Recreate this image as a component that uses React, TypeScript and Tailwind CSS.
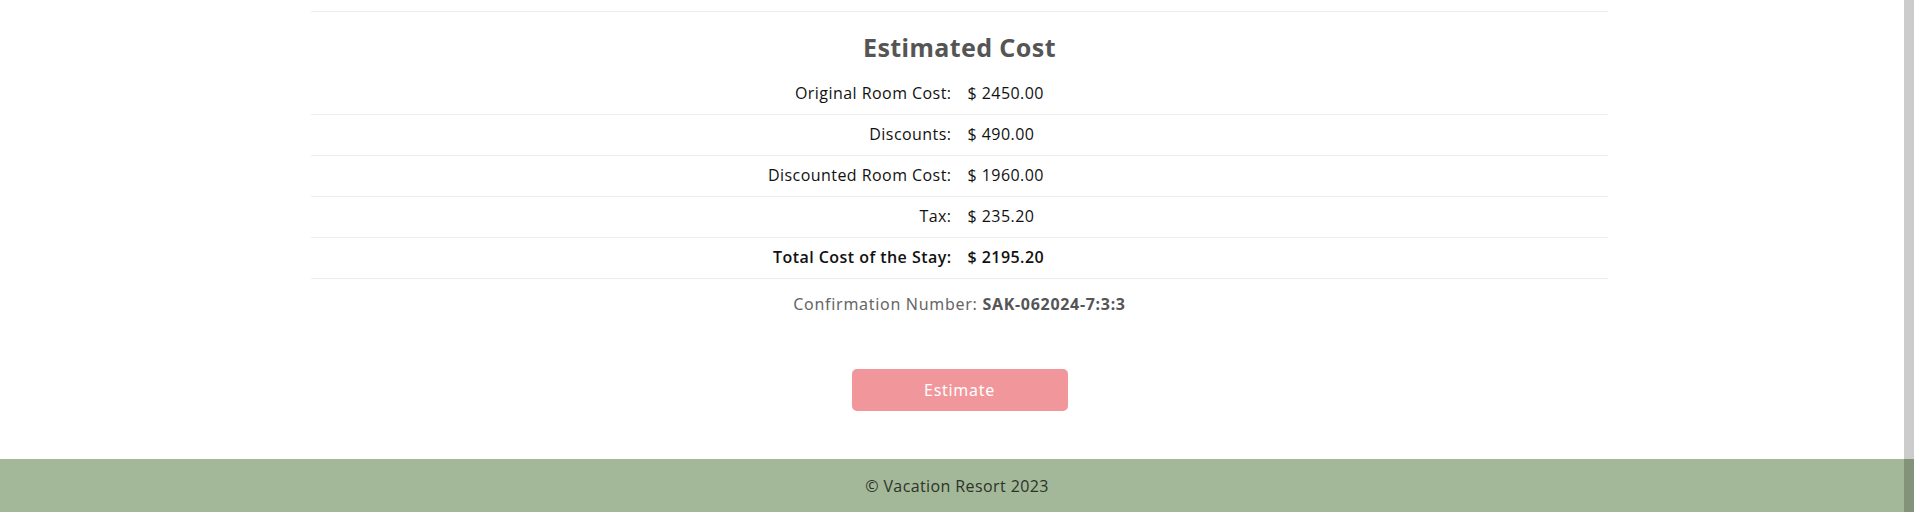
const rows = [
  { label: "Original Room Cost:", value: "$ 2450.00" },
  { label: "Discounts:", value: "$ 490.00" },
  { label: "Discounted Room Cost:", value: "$ 1960.00" },
  { label: "Tax:", value: "$ 235.20" },
  { label: "Total Cost of the Stay:", value: "$ 2195.20", bold: true },
]

const montserrat = "font-['Noto_Sans','Open_Sans',sans-serif]"
const poppins = "font-['Open_Sans','Noto_Sans',sans-serif]"

export default function App() {
  return (
    <div className="relative min-h-[512px] bg-white overflow-hidden">
      <div className="ml-[311px] w-[1297px] mt-[11px] border-t border-[#ececec]">
        <h2 className={`${montserrat} pt-[20px] pb-[11px] text-center text-[25px] leading-[30px] font-bold tracking-[0.4px] text-[#555555]`}>
          Estimated Cost
        </h2>
        <table className={`${poppins} w-full border-collapse text-[16px] tracking-[0.45px] text-[#111111]`}>
          <tbody>
            {rows.map((row) => (
              <tr key={row.label} className="h-[41px] border-b border-[#ececec]">
                <td className={`w-1/2 px-2 pb-[1px] text-right ${row.bold ? "font-semibold" : ""}`}>{row.label}</td>
                <td className={`w-1/2 px-2 pb-[1px] text-left ${row.bold ? "font-semibold" : ""}`}>{row.value}</td>
              </tr>
            ))}
          </tbody>
        </table>
        <p className={`${montserrat} mt-[13px] text-center text-[16px] leading-[24px] tracking-[0.7px] text-[#666666]`}>
          Confirmation Number: <span className="font-bold text-[#555555]">SAK-062024-7:3:3</span>
        </p>
        <div className="mt-[53px] flex justify-center">
          <button className={`${montserrat} h-[42px] w-[216px] rounded-[5px] bg-[#f1969a] text-[16px] tracking-[0.7px] text-white`}>
            Estimate
          </button>
        </div>
      </div>
      <footer className={`${poppins} mt-[48px] bg-[#a3b899] pt-[15px] pb-[15px] text-center text-[16px] leading-[24px] tracking-[0.4px] text-[#2d3329]`}>
        © Vacation Resort 2023
      </footer>
      <div className="absolute right-0 top-0 h-full w-[10px] bg-black/20" />
    </div>
  )
}
